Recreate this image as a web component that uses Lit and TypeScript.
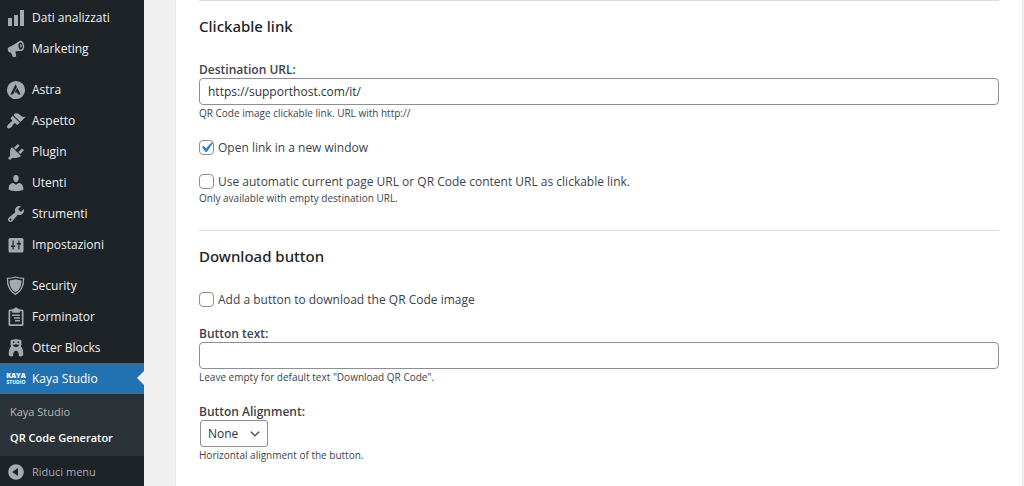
import { LitElement, html, css, svg, nothing } from "lit";
import { customElement, state } from "lit/decorators.js";

type Item = { icon: string; label: string; separated?: boolean; current?: boolean };

const icons: Record<string, unknown> = {
  chart: svg`<path d="M18 18V2h-4v16h4zm-6 0V7H8v11h4zm-6 0v-8H2v8h4z"/>`,
  megaphone: svg`<path fill-rule="evenodd" d="M13.600 1.900c2.300-.6 4.200 1.600 4.500 4.600.3 3.200-1 5.600-3.100 5.600-2.200-.1-4.300.1-5.600.6l.9 4.900-3.200.6-2.300-4.700c-1.500.3-2.500-.4-2.900-1.900-.4-1.600.1-2.900 1.300-3.500C6.700 6.700 10.400 3.400 13.600 1.900zm.8 1.500c-1.500.3-2.200 1.900-1.900 4 .3 2 1.200 3.300 2.500 3.200 1.300-.2 2-1.900 1.800-3.900-.3-2.100-1.200-3.500-2.400-3.300zm-.2 1.900c.9-.2 1.500.4 1.600 1.400.1 1.100-.3 1.700-1.200 1.800-.5-.9-.7-2.100-.4-3.200z"/>`,
  astra: svg`<path fill-rule="evenodd" d="M10 .9a9.100 9.100 0 1 1 0 18.200A9.100 9.100 0 0 1 10 .9zM9.600 4.300L4.400 14.600h2.600l3.900-7.700zm1.600 3.500l-2.500 4.800h2.300l.9 2h2.900z"/>`,
  brush: svg`<path d="M14.480 11.060L7.410 3.990l1.500-1.500c.5-.56 2.300-.47 3.510.32 1.210.8 1.430 1.280 2.910 2.100 1.180.64 2.450 1.260 4.450.85zm-.71.71L6.700 4.700 4.930 6.470c-.39.39-.39 1.020 0 1.410l1.060 1.060c.39.39.39 1.030 0 1.420-.6.6-1.430 1.110-2.210 1.690-.35.26-.7.53-1.010.84C1.430 14.230.4 16.080 1.400 17.070c.99 1 2.840-.03 4.180-1.360.31-.31.58-.66.85-1.020.57-.78 1.080-1.610 1.690-2.210.39-.39 1.020-.39 1.410 0l1.060 1.060c.39.39 1.020.39 1.410 0z"/>`,
  plug: svg`<path d="M13.110 4.360L9.870 7.600 8 5.730l3.240-3.240c.35-.34 1.050-.2 1.560.32.52.51.66 1.210.31 1.550zm-8 1.770l.91-1.120 9.010 9.010-1.190.84c-.71.71-2.630 1.160-3.820 1.160H6.140L4.900 17.260c-.59.59-1.540.59-2.120 0-.59-.58-.59-1.530 0-2.120l1.240-1.240v-3.880c0-1.130.4-3.190 1.090-3.890zm7.260 3.970l3.240-3.240c.34-.35 1.040-.21 1.550.31.52.51.66 1.210.31 1.550l-3.240 3.250z"/>`,
  user: svg`<path d="M10 9.250c-2.270 0-2.730-3.440-2.730-3.440C7 4.020 7.820 2 9.970 2c2.160 0 2.980 2.020 2.710 3.810 0 0-.41 3.440-2.680 3.440zm0 2.570L12.720 10c2.390 0 4.520 2.330 4.520 4.530v2.490s-3.650 1.130-7.240 1.130c-3.650 0-7.240-1.130-7.240-1.130v-2.490c0-2.250 1.940-4.480 4.470-4.480z"/>`,
  wrench: svg`<path d="M16.680 9.770c-1.340 1.340-3.300 1.670-4.950.99l-5.410 6.520c-.99.99-2.590.99-3.580 0s-.99-2.590 0-3.570l6.520-5.420c-.68-1.650-.35-3.610.99-4.950 1.280-1.280 3.120-1.620 4.720-1.060l-2.890 2.890 2.820 2.820 2.860-2.870c.53 1.580.18 3.390-1.080 4.650zM3.810 16.210c.4.39 1.040.39 1.430 0 .4-.4.4-1.040 0-1.430-.39-.4-1.030-.4-1.430 0-.39.39-.39 1.030 0 1.430z"/>`,
  sliders: svg`<path fill-rule="evenodd" d="M4 3h12a1.500 1.500 0 0 1 1.500 1.500v11.500a1.500 1.500 0 0 1-1.500 1.500H4a1.500 1.500 0 0 1-1.500-1.500V4.500A1.500 1.500 0 0 1 4 3zm2.500 2.500v5H5V12h1.500v2.500h1.200V12h1.500v-1.500H7.700v-5zm5.800 0V8h-1.500v1.500h1.500v5h1.200v-5H15V8h-1.500V5.500z"/>`,
  shield: svg`<path d="M9.500 1c2.600 1 5.200 1.400 8.100 1.400.2 7.300-2 12.400-8.100 16C3.400 14.800 1.200 9.700 1.400 2.400 4.300 2.400 6.900 2 9.500 1z" fill="none" stroke="currentColor" stroke-width="1.300"/><path d="M9.500 3.300c2 .7 3.900 1 6 1.100 0 5.500-1.600 9.100-6 11.900-4.400-2.800-6-6.400-6-11.900 2.100-.1 4-.4 6-1.100z"/>`,
  clipboard: svg`<path fill-rule="evenodd" d="M4 2.500h2.500V1.800h1.700a1.900 1.900 0 0 1 3.600 0h1.700v.7H16a1.500 1.500 0 0 1 1.500 1.500v13.500A1.500 1.500 0 0 1 16 19H4a1.500 1.500 0 0 1-1.500-1.500V4A1.500 1.500 0 0 1 4 2.500zM4.200 4.200v13.100h11.600V4.200h-2v1.600H6.200V4.200z"/><path d="M6 7.600h8v1.500H6zM8 10.300h6v1.500H8zM9 13h5v1.500H9z"/>`,
  otter: svg`<path fill-rule="evenodd" d="M6 1.900C7.200 1 12.800 1 14 1.900c1.200-.4 2 1 1.200 2 .6 1.500.4 2.800-.4 4.200 2 2.500 2.700 5.400 2.400 8.700-.2 1.600-2.500 2.100-4.300 1.300l-.2-2.700c-.3-1.800-1.300-2.600-2.700-2.600s-2.400.8-2.700 2.600l-.2 2.700c-1.800.8-4.100.3-4.300-1.300-.3-3.300.4-6.200 2.400-8.700-.8-1.400-1-2.700-.4-4.200-.8-1 0-2.400 1.200-2zM7 3.600v1.300h1.400V3.600zm4.600 0v1.300H13V3.600zM6.700 6.400c.6 1.900 1.900 2.500 3.300 2.500s2.700-.6 3.300-2.500l-2.300.4-1-1-1 1z"/>`,
  kaya: svg`<text x="10" y="9" text-anchor="middle" font-size="7" font-weight="800">KAYA</text><text x="10" y="15" text-anchor="middle" font-size="5" font-weight="700">STUDIO</text>`,
  collapse: svg`<path fill-rule="evenodd" d="M10 2.160a7.840 7.840 0 1 1 0 15.680 7.840 7.840 0 0 1 0-15.680zm2 11.720V6.120L6.180 9.970z"/>`,
};

const items: Item[] = [
  { icon: "chart", label: "Dati analizzati" },
  { icon: "megaphone", label: "Marketing" },
  { icon: "astra", label: "Astra", separated: true },
  { icon: "brush", label: "Aspetto" },
  { icon: "plug", label: "Plugin" },
  { icon: "user", label: "Utenti" },
  { icon: "wrench", label: "Strumenti" },
  { icon: "sliders", label: "Impostazioni" },
  { icon: "shield", label: "Security", separated: true },
  { icon: "clipboard", label: "Forminator" },
  { icon: "otter", label: "Otter Blocks" },
  { icon: "kaya", label: "Kaya Studio", current: true },
];

const icon = (name: string) =>
  html`<svg class="icon" viewBox="0 0 20 20" aria-hidden="true">${icons[name]}</svg>`;

@customElement("admin-menu")
export class AdminMenu extends LitElement {
  static styles = css`
    :host {
      display: block;
      background: #1d2327;
      padding-top: 2px;
      font-size: 12px;
    }
    ul { list-style: none; margin: 0; padding: 0; }
    .separated { margin-top: 10px; }
    .link {
      display: flex;
      align-items: center;
      gap: 6px;
      box-sizing: border-box;
      width: 100%;
      height: 31px;
      padding: 0 0 0 6px;
      border: 0;
      background: none;
      color: #f0f0f1;
      font: inherit;
      text-align: left;
      text-decoration: none;
      position: relative;
    }
    .name { line-height: 17px; }
    .icon { width: 20px; height: 20px; flex: none; color: #a7aaad; fill: currentColor; }
    .current { background: #2271b1; color: #fff; }
    .current .icon { color: #fff; }
    .current::after {
      content: "";
      position: absolute;
      right: 0;
      top: 8px;
      border: 7px solid transparent;
      border-left: 0;
      border-right-color: #f0f0f1;
    }
    .submenu { background: #2c3338; padding: 5px 0; }
    .sublink {
      display: block;
      padding: 0 10px;
      font-size: 11px;
      line-height: 26px;
      color: #b4b7ba;
      text-decoration: none;
    }
    .active { color: #fff; font-weight: 600; }
    .collapse { color: #a7aaad; font-size: 11px; }
  `;

  render() {
    return html`
      <nav aria-label="Menu principale">
        <ul>
          ${items.map(
            (item) => html`
              <li class=${item.separated ? "separated" : nothing}>
                <a class="link ${item.current ? "current" : ""}" href="#">${icon(item.icon)}<span class="name">${item.label}</span></a>
                ${item.current
                  ? html`<ul class="submenu">
                      <li><a class="sublink" href="#">Kaya Studio</a></li>
                      <li><a class="sublink active" href="#" aria-current="page">QR Code Generator</a></li>
                    </ul>`
                  : nothing}
              </li>
            `
          )}
        </ul>
        <button class="link collapse" type="button">${icon("collapse")}<span class="name">Riduci menu</span></button>
      </nav>
    `;
  }
}

@customElement("qr-settings")
export class QrSettings extends LitElement {
  static styles = css`
    :host {
      display: block;
      background: #fff;
      border: solid #e8e8e9;
      border-width: 0 1px;
      padding: 0 23px 23px;
      font-size: 12px;
      line-height: 17px;
      color: #3c434a;
    }
    .section { border-top: 1px solid #dcdcde; padding-top: 13px; }
    .section + .section { margin-top: 23px; }
    .title { margin: 0 0 23px; font-family: "Noto Sans", "Open Sans", sans-serif; font-size: 15px; line-height: 24px; font-weight: 500; color: #1d2327; }
    .field { margin-top: 17px; }
    .label { display: block; font-weight: 600; }
    .hint { margin: 0; font-size: 10px; }
    .text {
      display: block;
      box-sizing: border-box;
      width: 100%;
      height: 27px;
      margin: 0;
      padding: 0 8px;
      border: 1px solid #8c8f94;
      border-radius: 4px;
      background: #fff;
      color: #2c3338;
      font: inherit;
    }
    .check { display: flex; align-items: center; gap: 4px; }
    .box {
      appearance: none;
      box-sizing: border-box;
      width: 15px;
      height: 15px;
      margin: 0;
      flex: none;
      border: 1px solid #8c8f94;
      border-radius: 4px;
      background: #fff;
    }
    .box:checked {
      background: #fff url("data:image/svg+xml,%3Csvg xmlns='http://www.w3.org/2000/svg' viewBox='0 0 20 20'%3E%3Cpath d='M14.830 4.890l1.340.94-5.810 8.380H9.020L5.780 9.670l1.340-1.250 2.570 2.400z' fill='%233582c4'/%3E%3C/svg%3E") center / 21px no-repeat;
    }
    .select {
      appearance: none;
      display: block;
      height: 27px;
      margin: 0 1px;
      padding: 0 28px 0 7px;
      border: 1px solid #8c8f94;
      border-radius: 3px;
      color: #2c3338;
      font: inherit;
      background: #fff url("data:image/svg+xml,%3Csvg xmlns='http://www.w3.org/2000/svg' viewBox='0 0 20 20'%3E%3Cpath d='M5 6l5 5 5-5 2 1-7 7-7-7z' fill='%23555'/%3E%3C/svg%3E") right 5px center / 14px no-repeat;
    }
  `;

  @state() private url = "https://supporthost.com/it/";

  render() {
    return html`
      <section class="section">
        <h2 class="title">Clickable link</h2>
        <div class="field">
          <label class="label" for="url">Destination URL:</label>
          <input class="text" id="url" type="text" .value=${this.url} />
          <p class="hint">QR Code image clickable link. URL with http://</p>
        </div>
        <div class="field">
          <label class="check"><input class="box" type="checkbox" checked />Open link in a new window</label>
        </div>
        <div class="field">
          <label class="check"><input class="box" type="checkbox" />Use automatic current page URL or QR Code content URL as clickable link.</label>
          <p class="hint">Only available with empty destination URL.</p>
        </div>
      </section>
      <section class="section">
        <h2 class="title">Download button</h2>
        <div class="field">
          <label class="check"><input class="box" type="checkbox" />Add a button to download the QR Code image</label>
        </div>
        <div class="field">
          <label class="label" for="text">Button text:</label>
          <input class="text" id="text" type="text" />
          <p class="hint">Leave empty for default text "Download QR Code".</p>
        </div>
        <div class="field">
          <label class="label" for="align">Button Alignment:</label>
          <select class="select" id="align"><option>None</option></select>
          <p class="hint">Horizontal alignment of the button.</p>
        </div>
      </section>
    `;
  }
}

@customElement("app-root")
export class AppRoot extends LitElement {
  static styles = css`
    :host {
      display: grid;
      grid-template-columns: 144px minmax(0, 1fr);
      min-height: 100vh;
      background: #f0f0f1;
      font-family: "Open Sans", "Noto Sans", sans-serif;
    }
    .content { display: grid; padding: 0 1px 0 31px; }
  `;

  render() {
    return html`
      <admin-menu></admin-menu>
      <main class="content"><qr-settings></qr-settings></main>
    `;
  }
}
